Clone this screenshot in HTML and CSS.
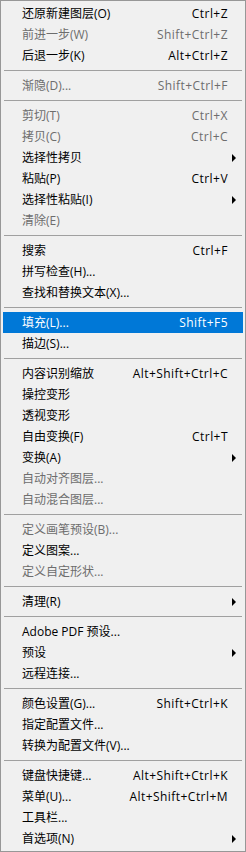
FILE: index.html
```html
<!DOCTYPE html>
<html lang="zh-CN">
  <head>
    <meta charset="UTF-8" />
    <title>编辑</title>
    <link rel="stylesheet" href="styles.css">
  </head>
  <body>
    <div class="menu">
      <div class="item"><span class="label">还原新建图层(O)</span><span class="key">Ctrl+Z</span><span class="sub"></span></div>
      <div class="item off"><span class="label">前进一步(W)</span><span class="key">Shift+Ctrl+Z</span><span class="sub"></span></div>
      <div class="item"><span class="label">后退一步(K)</span><span class="key">Alt+Ctrl+Z</span><span class="sub"></span></div>
      <div class="sep"></div>
      <div class="item off"><span class="label">渐隐(D)...</span><span class="key">Shift+Ctrl+F</span><span class="sub"></span></div>
      <div class="sep"></div>
      <div class="item off"><span class="label">剪切(T)</span><span class="key">Ctrl+X</span><span class="sub"></span></div>
      <div class="item off"><span class="label">拷贝(C)</span><span class="key">Ctrl+C</span><span class="sub"></span></div>
      <div class="item"><span class="label">选择性拷贝</span><span class="key"></span><span class="sub arrow"></span></div>
      <div class="item"><span class="label">粘贴(P)</span><span class="key">Ctrl+V</span><span class="sub"></span></div>
      <div class="item"><span class="label">选择性粘贴(I)</span><span class="key"></span><span class="sub arrow"></span></div>
      <div class="item off"><span class="label">清除(E)</span><span class="key"></span><span class="sub"></span></div>
      <div class="sep"></div>
      <div class="item"><span class="label">搜索</span><span class="key">Ctrl+F</span><span class="sub"></span></div>
      <div class="item"><span class="label">拼写检查(H)...</span><span class="key"></span><span class="sub"></span></div>
      <div class="item"><span class="label">查找和替换文本(X)...</span><span class="key"></span><span class="sub"></span></div>
      <div class="sep"></div>
      <div class="item active"><span class="label">填充(L)...</span><span class="key">Shift+F5</span><span class="sub"></span></div>
      <div class="item"><span class="label">描边(S)...</span><span class="key"></span><span class="sub"></span></div>
      <div class="sep"></div>
      <div class="item"><span class="label">内容识别缩放</span><span class="key">Alt+Shift+Ctrl+C</span><span class="sub"></span></div>
      <div class="item"><span class="label">操控变形</span><span class="key"></span><span class="sub"></span></div>
      <div class="item"><span class="label">透视变形</span><span class="key"></span><span class="sub"></span></div>
      <div class="item"><span class="label">自由变换(F)</span><span class="key">Ctrl+T</span><span class="sub"></span></div>
      <div class="item"><span class="label">变换(A)</span><span class="key"></span><span class="sub arrow"></span></div>
      <div class="item off"><span class="label">自动对齐图层...</span><span class="key"></span><span class="sub"></span></div>
      <div class="item off"><span class="label">自动混合图层...</span><span class="key"></span><span class="sub"></span></div>
      <div class="sep"></div>
      <div class="item off"><span class="label">定义画笔预设(B)...</span><span class="key"></span><span class="sub"></span></div>
      <div class="item"><span class="label">定义图案...</span><span class="key"></span><span class="sub"></span></div>
      <div class="item off"><span class="label">定义自定形状...</span><span class="key"></span><span class="sub"></span></div>
      <div class="sep"></div>
      <div class="item"><span class="label">清理(R)</span><span class="key"></span><span class="sub arrow"></span></div>
      <div class="sep"></div>
      <div class="item"><span class="label">Adobe PDF 预设...</span><span class="key"></span><span class="sub"></span></div>
      <div class="item"><span class="label">预设</span><span class="key"></span><span class="sub arrow"></span></div>
      <div class="item"><span class="label">远程连接...</span><span class="key"></span><span class="sub"></span></div>
      <div class="sep"></div>
      <div class="item"><span class="label">颜色设置(G)...</span><span class="key">Shift+Ctrl+K</span><span class="sub"></span></div>
      <div class="item"><span class="label">指定配置文件...</span><span class="key"></span><span class="sub"></span></div>
      <div class="item"><span class="label">转换为配置文件(V)...</span><span class="key"></span><span class="sub"></span></div>
      <div class="sep"></div>
      <div class="item"><span class="label">键盘快捷键...</span><span class="key">Alt+Shift+Ctrl+K</span><span class="sub"></span></div>
      <div class="item"><span class="label">菜单(U)...</span><span class="key">Alt+Shift+Ctrl+M</span><span class="sub"></span></div>
      <div class="item"><span class="label">工具栏...</span><span class="key"></span><span class="sub"></span></div>
      <div class="item"><span class="label">首选项(N)</span><span class="key"></span><span class="sub arrow"></span></div>
    </div>
  </body>
</html>
```

FILE: styles.css
```css
body {
  margin: 0;
  background-color: #f0f0f0;
}

.menu {
  width: 246px;
  height: 852px;
  box-sizing: border-box;
  border: 1px solid #979797;
  background-color: #f0f0f0;
  padding: 2px;
  font-family: "Open Sans", "Noto Sans CJK SC", sans-serif;
  font-size: 12px;
  color: #000;
}

.item {
  height: 21px;
  display: grid;
  grid-template-columns: 1fr auto 15px;
  align-items: center;
  padding-left: 19px;
  line-height: 21px;
  white-space: nowrap;
}

.key {
  letter-spacing: 0.45px;
}

.off {
  color: #6d6d6d;
}

.active {
  background-color: #0078d7;
  color: #fff;
}

.sep {
  height: 9px;
  display: flex;
  align-items: center;
  padding: 0 1px;
}

.sep::before {
  content: "";
  flex: 1;
  height: 1px;
  background-color: #a0a0a0;
}

.sub {
  height: 21px;
  display: flex;
  align-items: center;
  padding-left: 4px;
}

.arrow::before {
  content: "";
  width: 0;
  height: 0;
  border-top: 4px solid transparent;
  border-bottom: 4px solid transparent;
  border-left: 4px solid #000;
}
```
